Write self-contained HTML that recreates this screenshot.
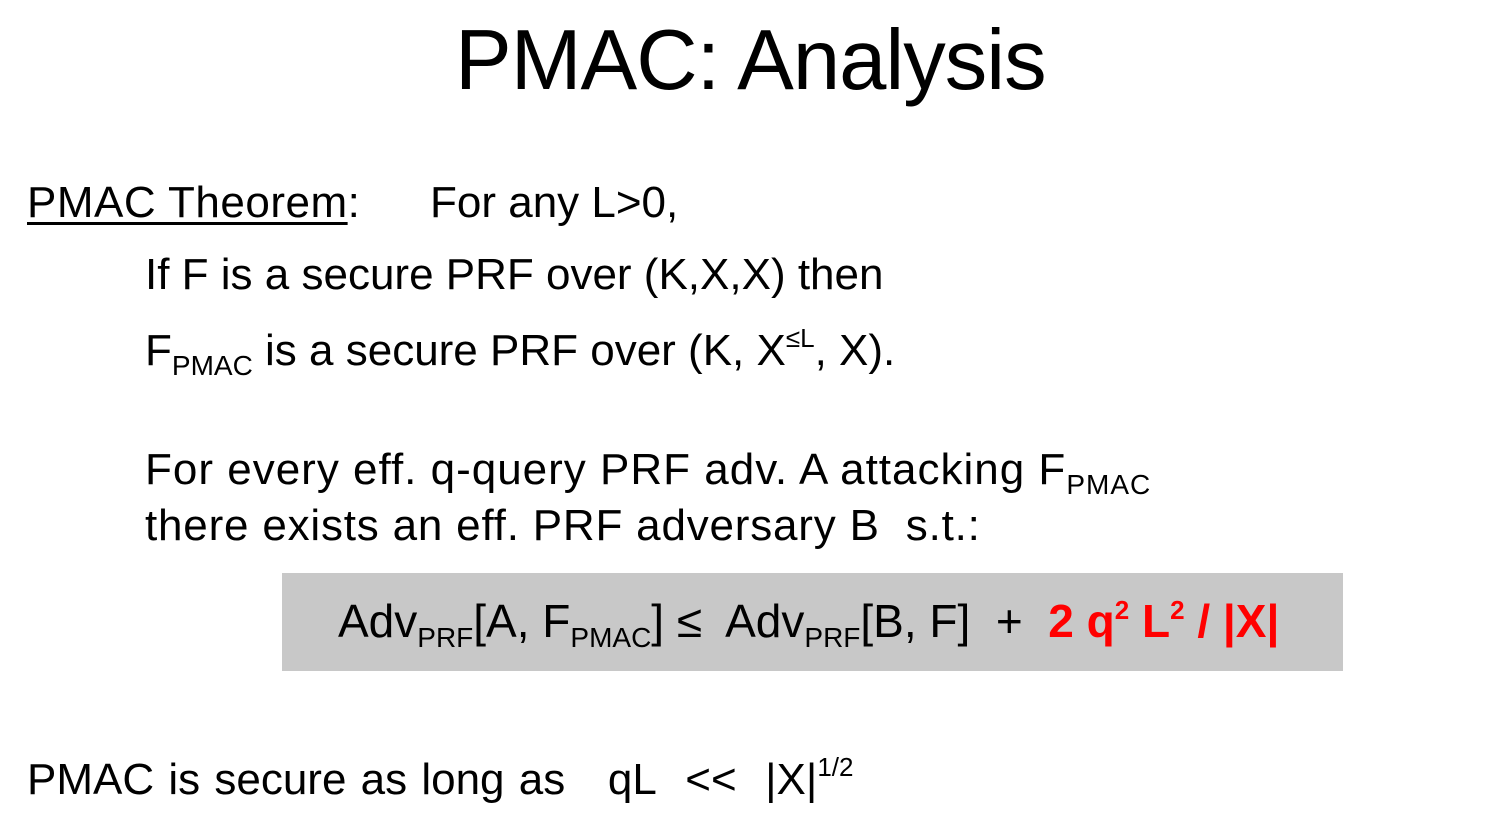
<!DOCTYPE html>
<html><head><meta charset="utf-8"><style>
html,body{margin:0;padding:0;background:#fff;width:1505px;height:824px;overflow:hidden;position:relative;font-family:"Liberation Sans",sans-serif;color:#000}
.t{position:absolute;white-space:nowrap;line-height:1;font-size:44px}
sub{font-size:28px;vertical-align:-10px;line-height:0}
sup{font-size:26px;vertical-align:18px;line-height:0}
.r{color:#ff0000;font-weight:bold}
</style></head><body>
<div class="t" style="left:455px;top:18px;font-size:85px;letter-spacing:-1px">PMAC: Analysis</div>
<div class="t" style="left:27px;top:181px;letter-spacing:0.5px"><span style="text-decoration:underline;text-decoration-thickness:3px;text-underline-offset:5px">PMAC Theorem</span>:</div>
<div class="t" style="left:430px;top:181px">For any L&gt;0,</div>
<div class="t" style="left:145px;top:253px">If F is a secure PRF over (K,X,X) then</div>
<div class="t" style="left:145px;top:329px">F<sub>PMAC</sub> is a secure PRF over (K, X<sup>≤L</sup>, X).</div>
<div class="t" style="left:145px;top:448px;letter-spacing:1px">For every eff. q-query PRF adv. A attacking F<sub>PMAC</sub></div>
<div class="t" style="left:145px;top:504px;letter-spacing:0.8px">there exists an eff. PRF adversary B&nbsp; s.t.:</div>
<div style="position:absolute;left:282px;top:573px;width:1061px;height:98px;background:#c8c8c8"></div>
<div class="t" style="left:338px;top:598px;font-size:46px">Adv<sub>PRF</sub>[A, F<sub>PMAC</sub>] ≤&nbsp; Adv<sub>PRF</sub>[B, F]&nbsp; +&nbsp; <span class="r">2 q<sup>2</sup> L<sup>2</sup> / |X|</span></div>
<div class="t" style="left:27px;top:758px;word-spacing:2px">PMAC is secure as long as &nbsp; qL&nbsp; &lt;&lt;&nbsp; |X|<sup>1/2</sup></div>
</body></html>
